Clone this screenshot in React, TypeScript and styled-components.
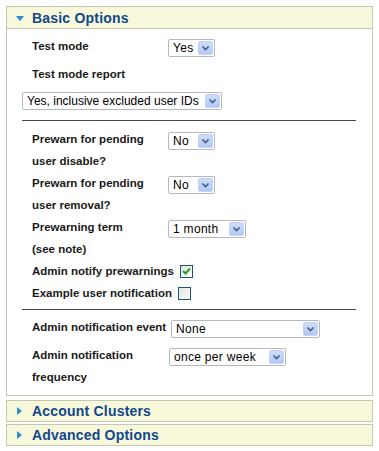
import styled, { createGlobalStyle } from 'styled-components'

const GlobalStyle = createGlobalStyle`
  body {
    margin: 6px;
    background: #ffffff;
    font-family: 'Liberation Sans', Arial, sans-serif;
  }
`

const Panel = styled.div`
  width: 367px;
  display: flex;
  flex-direction: column;
`

const Header = styled.div<{ $gap: number; $height: number }>`
  display: flex;
  align-items: center;
  height: ${(p) => p.$height}px;
  margin-top: ${(p) => p.$gap}px;
  padding-left: 9px;
  background: #f8f8da;
  border: 1px solid #c6c6b4;
  color: #12478e;
  font-weight: bold;
  font-size: 14px;
  letter-spacing: 0.2px;
`

const Arrow = styled.span<{ $open?: boolean }>`
  width: 0;
  height: 0;
  margin-right: 8px;
  ${(p) =>
    p.$open
      ? `border-left: 4px solid transparent;
         border-right: 4px solid transparent;
         border-top: 5px solid #2c8ad6;
         margin-top: 2px;`
      : `border-top: 4px solid transparent;
         border-bottom: 4px solid transparent;
         border-left: 5px solid #2c8ad6;
         margin-left: 1px;
         margin-right: 10px;`}
`

const Body = styled.div`
  border: 1px solid #c6c6b4;
  border-top: none;
  padding: 6px 16px 7px 15px;
  display: flex;
  flex-direction: column;
`

const Row = styled.div<{ $gap?: number }>`
  display: grid;
  grid-template-columns: 136px auto;
  align-items: start;
  padding-left: 10px;
  margin-top: ${(p) => p.$gap ?? 0}px;
`

const Label = styled.div`
  font-size: 11.5px;
  font-weight: bold;
  color: #1a1a1a;
  line-height: 22px;
  white-space: nowrap;
`

const CheckRow = styled.div<{ $gap?: number }>`
  display: flex;
  align-items: center;
  gap: 6px;
  padding-left: 10px;
  height: 22px;
  margin-top: ${(p) => p.$gap ?? 0}px;
`

const Separator = styled.hr<{ $top: number; $bottom: number }>`
  border: none;
  border-top: 1px solid #4a4a4a;
  margin: ${(p) => p.$top}px 0 ${(p) => p.$bottom}px 0;
`

const SelectBox = styled.div<{ $width: number; $shift?: number; $top?: number; $tight?: boolean }>`
  width: ${(p) => p.$width}px;
  height: 18px;
  box-sizing: border-box;
  margin-top: ${(p) => p.$top ?? 4}px;
  margin-left: ${(p) => p.$shift ?? 0}px;
  border: 1px solid #b4b9bd;
  border-radius: 2px;
  background: #fff;
  display: flex;
  align-items: center;
  justify-content: space-between;
  padding: 0 1px 0 4px;
  font-size: 12px;
  letter-spacing: ${(p) => (p.$tight ? 0 : 0.3)}px;
  white-space: nowrap;
  color: #000;
`

const DropButton = styled.span`
  flex: none;
  width: 15px;
  height: 14px;
  border-radius: 2px;
  background: linear-gradient(#cddcfb, #b2c8f6);
  border: 1px solid #c4d3f3;
  box-sizing: border-box;
  display: flex;
  align-items: center;
  justify-content: center;
`

const Check = styled.span`
  width: 13px;
  height: 13px;
  box-sizing: border-box;
  border: 1px solid #1c5180;
  background: linear-gradient(135deg, #e4e4de, #ffffff);
  display: flex;
  align-items: center;
  justify-content: center;
`

function Select(props: { value: string; width: number; shift?: number; top?: number; tight?: boolean }) {
  return (
    <SelectBox $width={props.width} $shift={props.shift} $top={props.top} $tight={props.tight}>
      <span>{props.value}</span>
      <DropButton>
        <svg width="7" height="5" viewBox="0 0 7 5">
          <path d="M0.5 0.5 L3.5 3.5 L6.5 0.5" stroke="#4d6185" strokeWidth="1.6" fill="none" />
        </svg>
      </DropButton>
    </SelectBox>
  )
}

function Checkbox(props: { checked?: boolean }) {
  return (
    <Check>
      {props.checked && (
        <svg width="9" height="8" viewBox="0 0 9 8">
          <path d="M1 4 L3.5 6.5 L8 1.5" stroke="#21a121" strokeWidth="2" fill="none" />
        </svg>
      )}
    </Check>
  )
}

export default function App() {
  return (
    <>
      <GlobalStyle />
      <Panel>
        <Header $gap={0} $height={21}>
          <Arrow $open />
          Basic Options
        </Header>
        <Body>
          <Row>
            <Label>Test mode</Label>
            <Select value="Yes" width={47} />
          </Row>
          <Row $gap={6}>
            <Label>Test mode report</Label>
          </Row>
          <Select value="Yes, inclusive excluded user IDs" width={200} top={7} tight />
          <Separator $top={10} $bottom={7} />
          <Row>
            <Label>
              Prewarn for pending
              <br />
              user disable?
            </Label>
            <Select value="No" width={47} />
          </Row>
          <Row>
            <Label>
              Prewarn for pending
              <br />
              user removal?
            </Label>
            <Select value="No" width={47} />
          </Row>
          <Row>
            <Label>
              Prewarning term
              <br />
              (see note)
            </Label>
            <Select value="1 month" width={78} />
          </Row>
          <CheckRow>
            <Label>Admin notify prewarnings</Label>
            <Checkbox checked />
          </CheckRow>
          <CheckRow>
            <Label>Example user notification</Label>
            <Checkbox />
          </CheckRow>
          <Separator $top={5} $bottom={6} />
          <Row>
            <Label>Admin notification event</Label>
            <Select value="None" width={149} shift={3} />
          </Row>
          <Row $gap={6}>
            <Label>
              Admin notification
              <br />
              frequency
            </Label>
            <Select value="once per week" width={117} shift={1} />
          </Row>
        </Body>
        <Header $gap={4} $height={20}>
          <Arrow />
          Account Clusters
        </Header>
        <Header $gap={2} $height={20}>
          <Arrow />
          Advanced Options
        </Header>
      </Panel>
    </>
  )
}
